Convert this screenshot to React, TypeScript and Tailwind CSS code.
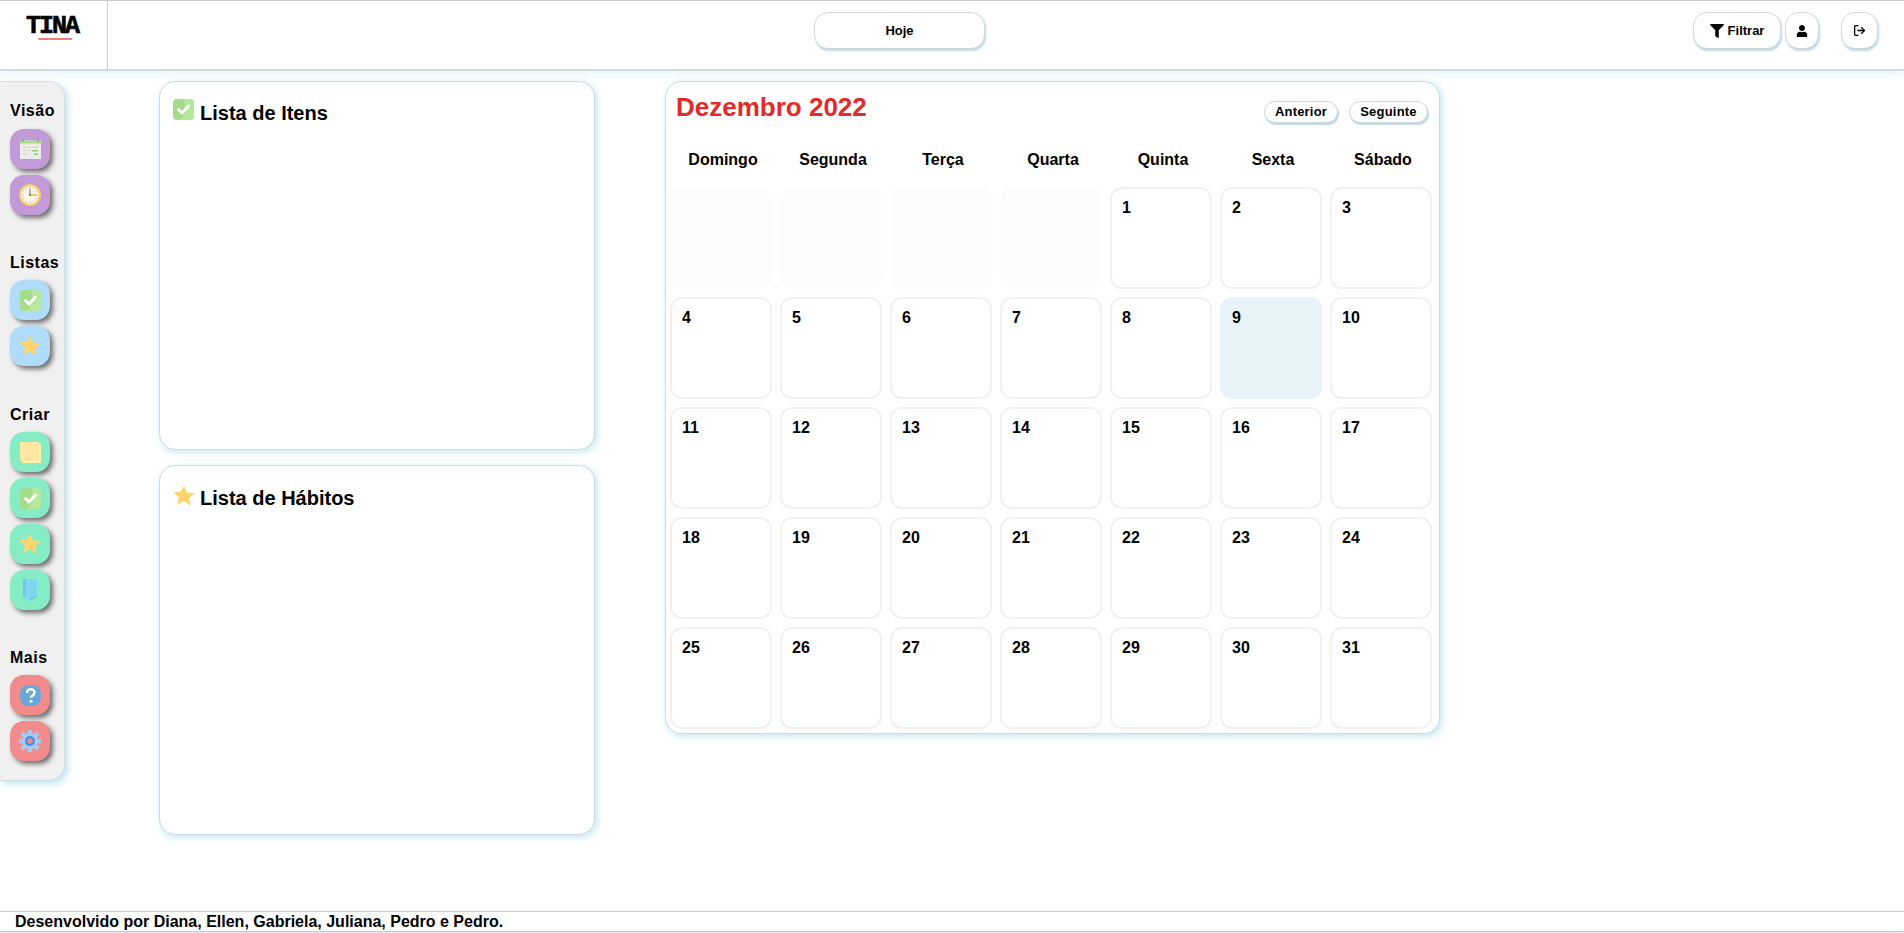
import React from 'react'
import { FaFilter, FaUser } from 'react-icons/fa'
import { LuLogOut } from 'react-icons/lu'

const CheckIcon = ({ size = 21 }: { size?: number }) => (
  <svg width={size} height={size} viewBox="0 0 21 21">
    <rect width="21" height="21" rx="4" fill="#a4dc8b" />
    <path d="M11 0h6a4 4 0 0 1 4 4v13a4 4 0 0 1-4 4H6c5-3 8-10 5-21z" fill="#b5e79d" />
    <path d="M5.500 10.500l3.500 3.500 6.500-7" fill="none" stroke="#fff" strokeWidth="3" strokeLinecap="round" strokeLinejoin="round" />
  </svg>
)

const StarIcon = ({ size = 22 }: { size?: number }) => (
  <svg width={size} height={size} viewBox="0 0 22 22">
    <path d="M11 0.500l3.200 7 7.600.8-5.700 5 1.700 7.700L11 16.100 4.200 20l1.700-7.700-5.700-5 7.600-.8z" fill="#fdd672" />
    <path d="M11 7.500l1.600 3.400 3.800.4-2.900 2.500.9 3.800L11 15.700z" fill="#fdcf68" />
  </svg>
)

const CalendarIcon = () => (
  <svg width="21" height="20" viewBox="0 0 21 20">
    <rect x="0" y="1.500" width="21" height="18.500" fill="#ececec" />
    <rect x="0" y="1.500" width="21" height="3" fill="#a9dc8e" />
    <rect x="2" y="0" width="1.400" height="3" fill="#9a9a9a" />
    <rect x="17.600" y="0" width="1.400" height="3" fill="#9a9a9a" />
    <path d="M3 7.500h3V9H3zM7.500 7.500h3V9h-3zM12 7.500h2V9h-2zM15 7.500h3V9h-3z" fill="#f5d76e" />
    <path d="M3 11h3v1H3zM7.500 11h3v1h-3z" fill="#d2d2d2" />
    <path d="M12 11h6v1.500h-6zM14 14.500h4V16h-4z" fill="#8fce7a" />
    <path d="M3 14.500h3V16H3z" fill="#f5d76e" />
  </svg>
)

const ClockIcon = () => (
  <svg width="22" height="22" viewBox="0 0 22 22">
    <circle cx="11" cy="11" r="11" fill="#fccb63" />
    <circle cx="11" cy="11" r="9" fill="#fdf6e8" />
    <path d="M11 3v1.300M11 17.700V19M3 11h1.300M17.700 11H19M7 4.100l.6 1M15 4.100l-.6 1M7 17.900l.6-1M15 17.900l-.6-1M4.100 7l1 .6M17.900 7l-1 .6M4.100 15l1-.6M17.900 15l-1-.6" stroke="#9a9a9a" strokeWidth=".7" />
    <path d="M11 11V4.500" stroke="#777" strokeWidth="1" />
    <path d="M11 11h7" stroke="#f6ae2d" strokeWidth="1.200" />
    <circle cx="11" cy="11" r="1" fill="#666" />
  </svg>
)

const NoteIcon = () => (
  <svg width="21" height="21" viewBox="0 0 21 21">
    <rect x="2" y="2" width="19" height="19" rx="1" fill="#fff3a3" />
    <rect x="0" y="0" width="19" height="19" rx="1" fill="#fee7a2" />
  </svg>
)

const BookmarkIcon = () => (
  <svg width="14" height="22" viewBox="0 0 14 22">
    <path d="M0 0h14v17l-7 5-7-5z" fill="#80d5ef" />
    <path d="M0 0h2.500v18.800L0 17zM7 20.200l7-4.700V17l-7 5z" fill="#72c4ec" />
  </svg>
)

const HelpIcon = () => (
  <svg width="21" height="21" viewBox="0 0 21 21">
    <path d="M10.500 0C18 0 21 3 21 10.500S18 21 10.500 21 0 18 0 10.500 3 0 10.500 0z" fill="#69a6dc" />
    <path d="M7 8c0-5 7.500-5 7.500-.5 0 3-3.500 3-3.500 5.500" fill="none" stroke="#fff" strokeWidth="2.400" />
    <circle cx="11" cy="16.200" r="1.500" fill="#fff" />
  </svg>
)

const GearIcon = () => (
  <svg width="22" height="22" viewBox="0 0 22 22">
    <path d="M11 7V0M11 15v7M7 11H0M15 11h7M8 8L3 3M14 14l5 5M14 8l5-5M8 14l-5 5" stroke="#a6cbf3" strokeWidth="4.500" />
    <circle cx="11" cy="11" r="8" fill="#a6cbf3" />
    <circle cx="11" cy="11" r="5" fill="#3f8ee8" />
    <circle cx="11" cy="11" r="2.800" fill="#f28b8b" />
  </svg>
)

const SideButton = ({ color, children }: { color: string; children: React.ReactNode }) => (
  <button className={`flex h-10 w-10 items-center justify-center rounded-[14px] shadow-[3px_3px_5px_rgba(0,0,0,0.55)] ${color}`}>
    {children}
  </button>
)

const SideLabel = ({ children }: { children: React.ReactNode }) => (
  <p className="mb-[7px] h-5 text-base leading-5 font-bold tracking-[0.5px] text-black">{children}</p>
)

const Sidebar = () => (
  <aside className="flex h-[700px] w-[65px] flex-col rounded-r-[16px] border-t border-r border-b border-[#d6dde0] bg-[#f0f0f0] pt-[19px] pl-[10px] shadow-[3px_3px_6px_rgba(140,205,230,0.55)]">
    <div className="mb-px"><SideLabel>Visão</SideLabel></div>
    <div className="flex flex-col gap-1.5">
      <SideButton color="bg-[#c39ad8]"><CalendarIcon /></SideButton>
      <SideButton color="bg-[#c39ad8]"><ClockIcon /></SideButton>
    </div>
    <div className="mt-[38px]"><SideLabel>Listas</SideLabel></div>
    <div className="flex flex-col gap-1.5">
      <SideButton color="bg-[#aedcfa]"><CheckIcon /></SideButton>
      <SideButton color="bg-[#aedcfa]"><StarIcon /></SideButton>
    </div>
    <div className="mt-[39px]"><SideLabel>Criar</SideLabel></div>
    <div className="flex flex-col gap-1.5">
      <SideButton color="bg-[#86ecc6]"><NoteIcon /></SideButton>
      <SideButton color="bg-[#86ecc6]"><CheckIcon /></SideButton>
      <SideButton color="bg-[#86ecc6]"><StarIcon /></SideButton>
      <SideButton color="bg-[#86ecc6]"><BookmarkIcon /></SideButton>
    </div>
    <div className="mt-[38px]"><SideLabel>Mais</SideLabel></div>
    <div className="flex flex-col gap-1.5">
      <SideButton color="bg-[#f28b8b]"><HelpIcon /></SideButton>
      <SideButton color="bg-[#f28b8b]"><GearIcon /></SideButton>
    </div>
  </aside>
)

const ListCard = ({ icon, title, className, titleClass }: { icon: React.ReactNode; title: string; className: string; titleClass: string }) => (
  <section className={`rounded-[16px] border border-[#cfdbe2] bg-white pl-[13px] shadow-[2px_2px_7px_rgba(140,205,230,0.55)] ${className}`}>
    <div className="flex items-start">
      <div className="w-[27px] shrink-0">{icon}</div>
      <h2 className={`text-xl leading-6 font-bold text-black ${titleClass}`}>{title}</h2>
    </div>
  </section>
)

const weekDays = ['Domingo', 'Segunda', 'Terça', 'Quarta', 'Quinta', 'Sexta', 'Sábado']
const days = Array.from({ length: 31 }, (_, i) => i + 1)

const Calendar = () => (
  <section className="h-[653px] w-[775px] rounded-[16px] border border-[#cfdbe2] bg-white px-1 shadow-[2px_2px_7px_rgba(140,205,230,0.55)]">
    <div className="flex items-start justify-between">
      <h1 className="mt-[10px] ml-[6px] text-[26px] leading-[30px] font-bold text-[#e22b2b]">Dezembro 2022</h1>
      <div className="mt-[19px] mr-[7px] flex gap-[11px]">
        <button className="h-[22px] w-[74px] rounded-[11px] border border-[#d2d8dc] bg-white text-[13px] leading-4 font-bold tracking-[0.2px] text-black shadow-[1px_2px_1px_rgba(140,190,215,0.6)]">Anterior</button>
        <button className="h-[22px] w-[79px] rounded-[11px] border border-[#d2d8dc] bg-white text-[13px] leading-4 font-bold tracking-[0.2px] text-black shadow-[1px_2px_1px_rgba(140,190,215,0.6)]">Seguinte</button>
      </div>
    </div>
    <div className="mt-[27px] ml-[2px] grid grid-cols-[repeat(7,102px)] gap-x-2">
      {weekDays.map((d) => (
        <p key={d} className="text-center text-base leading-5 font-bold text-black">{d}</p>
      ))}
    </div>
    <div className="mt-[17px] grid grid-cols-[repeat(7,102px)] auto-rows-[102px] gap-2">
      {[0, 1, 2, 3].map((i) => (
        <div key={i} className="rounded-[12px] bg-[#fdfbfe]" />
      ))}
      {days.map((d) => (
        <div key={d} className={`rounded-[12px] border-2 pt-[9px] pl-[10px] text-base leading-5 font-bold text-black ${d === 9 ? 'border-[#e8f3f9] bg-[#e8f3f9]' : 'border-[#f2f1ee] bg-white'}`}>
          {d}
        </div>
      ))}
    </div>
  </section>
)

const HeaderButton = ({ className, children }: { className: string; children: React.ReactNode }) => (
  <button className={`flex h-[37px] items-center justify-center gap-1 rounded-[14px] border border-[#d5d8da] bg-white text-[13px] font-bold text-black shadow-[1px_2px_2px_rgba(140,190,215,0.6)] ${className}`}>
    {children}
  </button>
)

export default function App() {
  return (
    <div className="flex h-[933px] flex-col overflow-hidden bg-white font-['Liberation_Sans',Arial,sans-serif]">
      <header className="flex h-[71px] shrink-0 border-t border-b-2 border-t-[#cccccc] border-b-[#cfdde5] bg-white shadow-[0_2px_8px_rgba(180,225,240,0.4)]">
        <div className="flex h-full w-[108px] shrink-0 flex-col items-center border-r border-[#cccccc] pt-[15px]">
          <span className="pr-[3px] font-['Liberation_Mono',monospace] text-[25px] leading-[22px] font-bold tracking-[-2px] text-black [-webkit-text-stroke:0.6px_black]">TINA</span>
          <span className="mt-0 ml-[2px] h-[2px] w-[34px] rounded-full bg-[#f47c7c]" />
        </div>
        <div className="flex flex-1 items-start pt-[11px]">
          <HeaderButton className="ml-[706px] w-[171px]">Hoje</HeaderButton>
          <HeaderButton className="ml-[708px] w-[88px]"><FaFilter size={14} />Filtrar</HeaderButton>
          <HeaderButton className="ml-1 w-[34px]"><FaUser size={12} /></HeaderButton>
          <HeaderButton className="ml-[22px] w-[37px]"><LuLogOut size={13} strokeWidth={2.5} /></HeaderButton>
        </div>
      </header>

      <main className="flex flex-1 items-start pt-[10px]">
        <Sidebar />
        <div className="ml-[94px] flex w-[436px] flex-col gap-[15px]">
          <ListCard className="h-[369px] pt-[17px]" titleClass="mt-[2px]" icon={<CheckIcon />} title="Lista de Itens" />
          <ListCard className="h-[370px] pt-[19px]" titleClass="mt-[1px]" icon={<StarIcon />} title="Lista de Hábitos" />
        </div>
        <div className="ml-[70px]">
          <Calendar />
        </div>
      </main>

      <footer className="mb-[1px] h-[21px] shrink-0 border-t border-b border-[#cccccc] pl-[15px] text-base leading-[19px] font-bold text-black shadow-[0_2px_3px_rgba(180,215,230,0.6)]">
        Desenvolvido por Diana, Ellen, Gabriela, Juliana, Pedro e Pedro.
      </footer>
    </div>
  )
}
